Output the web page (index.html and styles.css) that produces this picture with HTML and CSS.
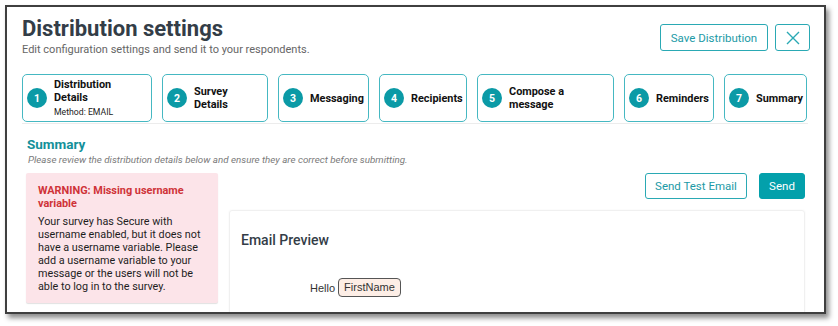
FILE: index.html
```html
<!DOCTYPE html>
<html>
<head>
<meta charset="utf-8">
<link rel="stylesheet" href="styles.css">
</head>
<body>
<div class="frame">
  <header class="head">
    <div class="titles">
      <h1 class="title">Distribution settings</h1>
      <p class="subtitle">Edit configuration settings and send it to your respondents.</p>
    </div>
    <div class="head-actions">
      <button class="btn btn-outline btn-save">Save Distribution</button>
      <button class="btn btn-outline btn-close" aria-label="Close">
        <svg width="14" height="14" viewBox="0 0 14 14"><path d="M1 1L13 13M13 1L1 13" stroke="#2aa9b4" stroke-width="1.4" fill="none"/></svg>
      </button>
    </div>
  </header>

  <nav class="steps">
    <div class="step"><span class="num">1</span><span class="label">Distribution<br>Details<span class="meta">Method: EMAIL</span></span></div>
    <div class="step"><span class="num">2</span><span class="label">Survey<br>Details</span></div>
    <div class="step"><span class="num">3</span><span class="label">Messaging</span></div>
    <div class="step"><span class="num">4</span><span class="label">Recipients</span></div>
    <div class="step"><span class="num">5</span><span class="label">Compose a<br>message</span></div>
    <div class="step"><span class="num">6</span><span class="label">Reminders</span></div>
    <div class="step"><span class="num">7</span><span class="label">Summary</span></div>
  </nav>

  <section class="summary">
    <h2 class="summary-title">Summary</h2>
    <p class="summary-note">Please review the distribution details below and ensure they are correct before submitting.</p>
    <div class="summary-body">
      <div class="warning">
        <div class="warning-title">WARNING: Missing username variable</div>
        <p class="warning-text">Your survey has Secure with username enabled, but it does not have a username variable. Please add a username variable to your message or the users will not be able to log in to the survey.</p>
      </div>
      <div class="preview-col">
        <div class="send-actions">
          <button class="btn btn-outline btn-test">Send Test Email</button>
          <button class="btn btn-fill btn-send">Send</button>
        </div>
        <div class="preview-card">
          <h3 class="preview-title">Email Preview</h3>
          <div class="preview-msg">Hello <span class="chip">FirstName</span></div>
        </div>
      </div>
    </div>
  </section>
</div>
</body>
</html>
```

FILE: styles.css
```css
* { box-sizing: border-box; }
html, body { margin: 0; padding: 0; background: #fff; }
body { width: 838px; height: 326px; overflow: hidden; font-family: Roboto, "Liberation Sans", Arial, sans-serif; }

.frame {
  margin: 5px 0 0 5px;
  width: 821px;
  height: 309px;
  border: 2px solid #3f3f3f;
  background: #fff;
  box-shadow: 3px 4px 5px rgba(0,0,0,0.45);
  padding: 9px 14px 0 15px;
  overflow: hidden;
}

.head { display: flex; justify-content: space-between; align-items: flex-start; }
.title { margin: 0; font-size: 22px; line-height: 26px; font-weight: 700; color: #333d47; }
.subtitle { margin: 1px 0 0; font-size: 11px; line-height: 14px; color: #666; }
.head-actions { display: flex; gap: 7px; margin-top: 8px; }

.btn {
  font-family: Roboto, "Liberation Sans", Arial, sans-serif;
  font-size: 11.5px;
  height: 27px;
  border-radius: 3px;
  cursor: pointer;
  padding: 0;
}
.btn-outline { background: #fff; border: 1.5px solid #2aa9b4; color: #1c9aa6; }
.btn-fill { background: #03a0ab; border: 1.5px solid #03a0ab; color: #fff; }
.btn-save { width: 108px; }
.btn-close { width: 35px; display: flex; align-items: center; justify-content: center; }
.btn-test { width: 102px; height: 26px; }
.btn-send { width: 46px; height: 26px; }

.steps {
  display: grid;
  grid-template-columns: 130px 106px 91px 88px 137px 90px 83px;
  column-gap: 10px;
  margin-top: 17px;
  padding-bottom: 1px;
  border-bottom: 1px solid #ececec;
  width: 786px;
}
.step {
  height: 48px;
  border: 1px solid #45b8c2;
  border-radius: 5px;
  display: flex;
  align-items: center;
  gap: 7px;
  padding-left: 4px;
}
.num {
  width: 20px; height: 20px; flex: none;
  border-radius: 50%;
  background: #0b9aa6;
  color: #fff;
  font-size: 10.5px;
  font-weight: 700;
  display: flex; align-items: center; justify-content: center;
}
.label { font-size: 10.9px; line-height: 13px; font-weight: 700; color: #111; }
.meta { display: block; font-size: 8.7px; font-weight: 400; line-height: 12px; margin-top: 2px; color: #222; }

.summary { padding-left: 4px; }
.summary-title { margin: 12px 0 0 1px; font-size: 13.5px; line-height: 16px; font-weight: 700; color: #13909a; }
.summary-note { margin: 2px 0 0 2px; font-size: 9.8px; line-height: 12px; font-style: italic; color: #7a7a7a; }

.summary-body { display: flex; gap: 11px; margin-top: 7px; margin-right: 5px; }
.warning {
  width: 192px; height: 130px; flex: none;
  background: #fce4e9;
  border-radius: 2px;
  box-shadow: 0 1px 1px rgba(0,0,0,0.12);
  padding: 11px 8px 0 12px;
}
.warning-title { font-size: 10.9px; line-height: 13px; font-weight: 700; color: #cf3338; }
.warning-text { margin: 5px 0 0; font-size: 10.8px; line-height: 13px; color: #1e1e1e; }

.preview-col { flex: 1; display: flex; flex-direction: column; }
.send-actions { display: flex; justify-content: flex-end; gap: 12px; }
.preview-card {
  margin-top: 11px;
  height: 120px;
  border: 1px solid #f0f0f0;
  border-radius: 3px;
  box-shadow: 0 0 2px rgba(0,0,0,0.05);
  padding: 20px 11px 0;
}
.preview-title { margin: 0; font-size: 14px; line-height: 18px; font-weight: 500; color: #333d47; }
.preview-msg { margin-top: 29px; padding-left: 69px; font-family: "Liberation Sans", Arial, sans-serif; font-size: 11px; color: #333; display: flex; align-items: center; gap: 3px; }
.chip { background: #fdeee6; border: 1px solid #555; border-radius: 4px; padding: 2px 5px; line-height: 13px; }
```
